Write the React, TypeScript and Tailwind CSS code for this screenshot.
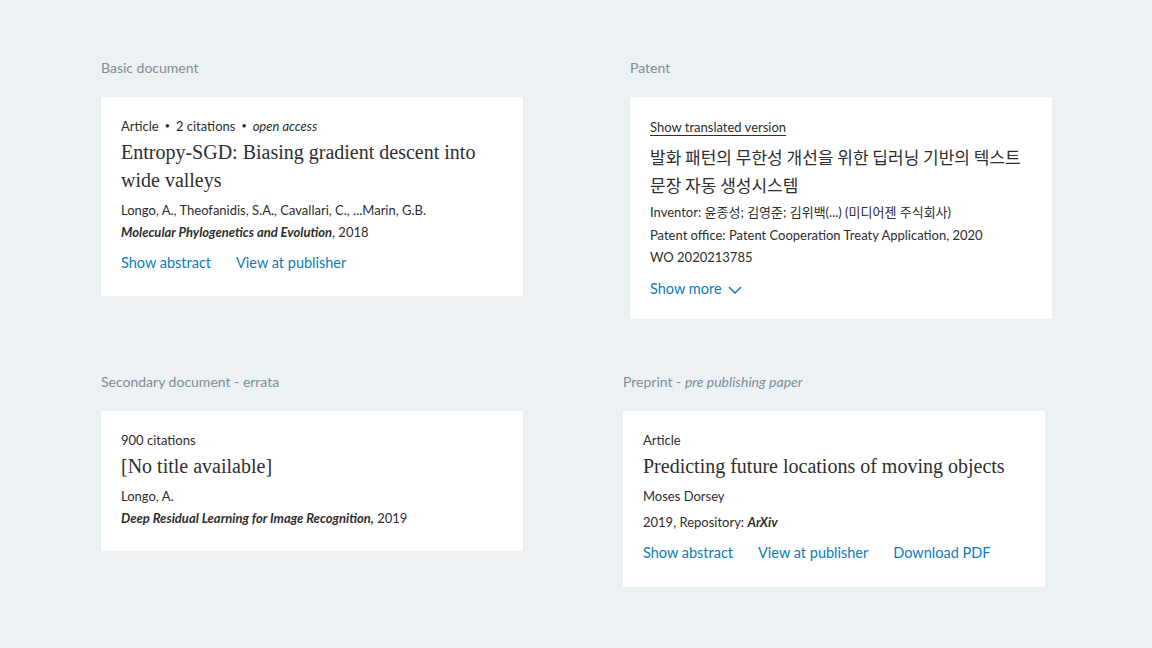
const sans = "font-['Lato','Noto_Sans_CJK_KR',sans-serif]";
const serif = "font-['Liberation_Serif','Noto_Sans_CJK_KR',serif]";

function Label({ children }: { children: React.ReactNode }) {
    return <div className="text-[14px] leading-[20px] text-[#7e8e98] mb-[19px]">{children}</div>;
}

function Links({ items }: { items: string[] }) {
    return (
        <div className="flex gap-[25px] mt-[8px] text-[14.5px] leading-[24px] text-[#0c7dbb]">
            {items.map((t) => (
                <a key={t} href="#" className="hover:underline">{t}</a>
            ))}
        </div>
    );
}

export default function App() {
    return (
        <div className={`min-h-screen bg-[#ecf1f4] ${sans} text-[#2e2e2e]`}>
            <div className="grid grid-cols-[422px_422px] gap-x-[107px] gap-y-[53px] pl-[101px] pt-[58px] items-start">
                {/* Basic document */}
                <section>
                    <Label>Basic document</Label>
                    <div className="bg-white px-[20px] pt-[19px] pb-[21px]">
                        <div className="flex items-center text-[13px] leading-[20px]">
                            <span>Article</span>
                            <span className="mx-[6px] text-[9px]">•</span>
                            <span>2 citations</span>
                            <span className="mx-[6px] text-[9px]">•</span>
                            <span className="italic">open access</span>
                        </div>
                        <h2 className={`${serif} mt-[2px] text-[20px] leading-[28px] text-[#2e2e2e]`}>
                            Entropy-SGD: Biasing gradient descent into wide valleys
                        </h2>
                        <div className="mt-[5px] text-[13px] leading-[22px]">
                            <p>Longo, A., Theofanidis, S.A., Cavallari, C., ...Marin, G.B.</p>
                            <p>
                                <span className="font-bold italic">Molecular Phylogenetics and Evolution</span>, 2018
                            </p>
                        </div>
                        <Links items={['Show abstract', 'View at publisher']} />
                    </div>
                </section>

                {/* Patent */}
                <section>
                    <Label>Patent</Label>
                    <div className="bg-white px-[20px] pt-[20px] pb-[18px]">
                        <div className="text-[13px] leading-[20px]">
                            <a href="#" className="underline underline-offset-[3px] decoration-[#2e2e2e]">
                                Show translated version
                            </a>
                        </div>
                        <h2 className="mt-[6px] text-[17px] leading-[28px] font-['Noto_Sans_CJK_KR',sans-serif]">
                            발화 패턴의 무한성 개선을 위한 딥러닝 기반의 텍스트 문장 자동 생성시스템
                        </h2>
                        <div className="mt-[2px] text-[13px] leading-[22.5px]">
                            <p>Inventor: 윤종성; 김영준; 김위백(...) (미디어젠 주식회사)</p>
                            <p>Patent office: Patent Cooperation Treaty Application, 2020</p>
                            <p>WO 2020213785</p>
                        </div>
                        <div className="mt-[8px] flex items-center gap-[6px] text-[14.5px] leading-[24px] text-[#0c7dbb]">
                            <span>Show more</span>
                            <svg width="14" height="8" viewBox="0 0 14 8" fill="none" stroke="currentColor" strokeWidth="1.5" className="mt-[2px]">
                                <polyline points="1,1 7,7 13,1" />
                            </svg>
                        </div>
                    </div>
                </section>

                {/* Secondary document */}
                <section>
                    <Label>Secondary document - errata</Label>
                    <div className="bg-white px-[20px] pt-[19px] pb-[22px]">
                        <div className="text-[13px] leading-[20px]">900 citations</div>
                        <h2 className={`${serif} mt-[2px] text-[20px] leading-[28px]`}>[No title available]</h2>
                        <div className="mt-[5px] text-[13px] leading-[22px]">
                            <p>Longo, A.</p>
                            <p>
                                <span className="font-bold italic">Deep Residual Learning for Image Recognition,</span> 2019
                            </p>
                        </div>
                    </div>
                </section>

                {/* Preprint */}
                <section className="-ml-[7px] w-[422px]">
                    <Label>
                        Preprint - <span className="italic">pre publishing paper</span>
                    </Label>
                    <div className="bg-white px-[20px] pt-[19px] pb-[22px]">
                        <div className="text-[13px] leading-[20px]">Article</div>
                        <h2 className={`${serif} mt-[2px] text-[20px] leading-[28px]`}>
                            Predicting future locations of moving objects
                        </h2>
                        <p className="mt-[5px] text-[13px] leading-[22px]">Moses Dorsey</p>
                        <p className="mt-[4px] text-[13px] leading-[22px]">
                            2019, Repository: <span className="font-bold italic">ArXiv</span>
                        </p>
                        <Links items={['Show abstract', 'View at publisher', 'Download PDF']} />
                    </div>
                </section>
            </div>
        </div>
    );
}
